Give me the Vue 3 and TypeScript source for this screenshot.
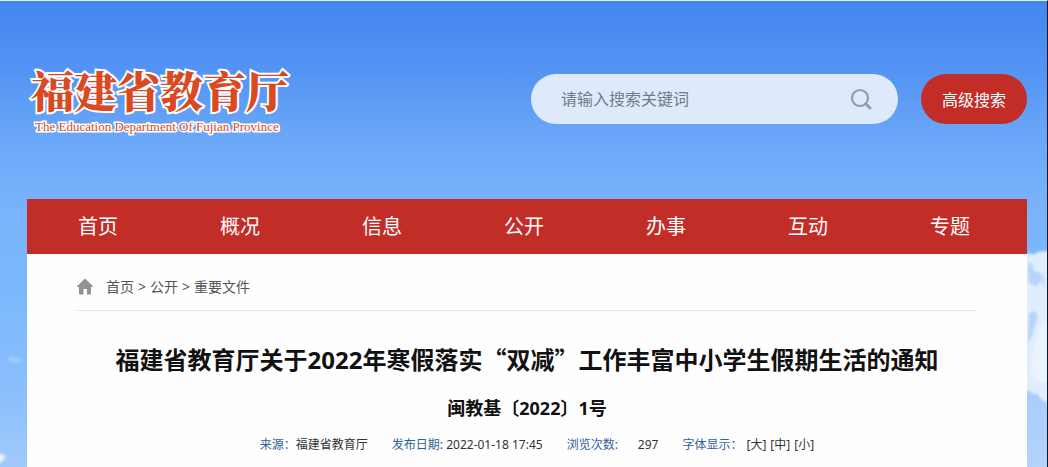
<script setup lang="ts">
import { ref } from 'vue'

const keyword = ref('')
const navItems: string[] = ['首页', '概况', '信息', '公开', '办事', '互动', '专题']
const sizes: string[] = ['大', '中', '小']
</script>

<template>
  <div class="page" lang="zh-CN">
    <svg class="clouds clouds-left" viewBox="0 0 27 227" aria-hidden="true">
      <defs>
        <filter id="soft-left" x="-50%" y="-50%" width="200%" height="200%">
          <feGaussianBlur stdDeviation="1.4" />
        </filter>
      </defs>
      <g filter="url(#soft-left)">
        <path d="M8 118 C11 115 15 119 23 120 C20 124 12 122 8 120Z" fill="#a9d0fd" />
        <path d="M-3 214 C0 213 3 216 6 215 C5 219 2 222 -3 224Z" fill="#eef6ff" />
      </g>
    </svg>
    <svg class="clouds clouds-right" viewBox="0 0 20 227" aria-hidden="true">
      <defs>
        <filter id="soft-right" x="-30%" y="-10%" width="160%" height="120%">
          <feGaussianBlur stdDeviation="1.2" />
        </filter>
      </defs>
      <g filter="url(#soft-right)">
        <path d="M-2 16 C2 10 6 16 8 14 C12 10 16 13 24 10 V162 C17 164 14 158 10 154 C6 156 4 149 -2 150Z" fill="#dfedfd" />
        <path d="M1 24 C4 19 6 28 8 32 C15 30 17 38 12 44 C8 48 3 44 1 40Z" fill="#b9d4fa" />
        <path d="M2 74 C8 68 13 74 9 82 C6 88 6 98 1 102Z" fill="#b5d4fc" />
        <path d="M14 40 L17 30 L18 50Z" fill="#c5dcfb" />
        <path d="M13 85 C18 78 22 84 22 98 V140 C12 146 4 138 4 125 C5 110 10 98 13 85Z" fill="#ebf4fe" />
      </g>
    </svg>

    <header class="header">
      <a class="logo" href="#">
        <span class="logo-cn">福建省教育厅</span>
        <span class="logo-en">The Education Department Of Fujian Province</span>
      </a>
      <form class="search" role="search" @submit.prevent>
        <div class="search-box">
          <input v-model="keyword" class="search-input" type="text" placeholder="请输入搜索关键词" aria-label="搜索关键词" />
          <button class="search-icon" type="submit" aria-label="搜索">
            <svg width="22" height="22" viewBox="0 0 22 22" fill="none" stroke="#919ba9" aria-hidden="true">
              <circle cx="10" cy="10" r="8" stroke-width="2.2" />
              <path d="M15.8 15.8 L20 20" stroke-width="3" stroke-linecap="round" />
            </svg>
          </button>
        </div>
        <button class="advanced" type="button">高级搜索</button>
      </form>
    </header>

    <nav class="nav">
      <a v-for="item in navItems" :key="item" class="nav-item" href="#">{{ item }}</a>
    </nav>

    <main class="content">
      <div class="crumbs">
        <svg class="home" width="16" height="17" viewBox="0 0 16 17" aria-hidden="true">
          <path d="M8 0.5 L16 8.2 Q16 9 15.2 9 H14 V15.5 Q14 16.5 13 16.5 H10 V11 H6.5 V16.5 H3 Q2 16.5 2 15.5 V9 H0.8 Q0 9 0 8.2Z" fill="#929292" />
        </svg>
        <a href="#">首页</a><span>&gt;</span><a href="#">公开</a><span>&gt;</span><a href="#">重要文件</a>
      </div>
      <h1 class="title">福建省教育厅关于<span class="num">2022</span>年寒假落实“双减”工作丰富中小学生假期生活的通知</h1>
      <h2 class="doc-no">闽教基〔<span class="num">2022</span>〕<span class="num">1</span>号</h2>
      <div class="meta">
        <span><span class="label">来源：</span>福建省教育厅</span>
        <span><span class="label">发布日期:</span> 2022-01-18 17:45</span>
        <span class="views"><span class="label">浏览次数:</span><span>297</span></span>
        <span class="sizes">
          <span class="label">字体显示：</span>
          <button v-for="s in sizes" :key="s" class="size" type="button">[{{ s }}]</button>
        </span>
      </div>
    </main>
  </div>
</template>

<style>
body {
  background: #b0d3fd;
}
</style>

<style scoped>
.page {
  position: relative;
  box-sizing: border-box;
  min-height: 100vh;
  display: flex;
  flex-direction: column;
  padding: 0 20px 0 27px;
  border-top: 1px solid #d9f2fb;
  border-right: 1px solid #0b1626;
  background: linear-gradient(#4386ef 0, #5293f3 66px, #69a6f8 132px, #78b2fb 198px, #7ab8fc 290px, #8dc0fc 400px, #a0c9fb 466px);
  font-family: "Noto Sans", "Noto Sans CJK SC", sans-serif;
  overflow: hidden;
}
.clouds {
  position: absolute;
  top: 239px;
  height: 227px;
}
.clouds-left {
  left: 0;
  width: 27px;
}
.clouds-right {
  right: 0;
  width: 20px;
  background: linear-gradient(#78b2fb00, #a9cdfb 150px, #b1d3fc);
}
a {
  color: inherit;
  text-decoration: none;
}
button {
  border: 0;
  padding: 0;
  background: none;
  font-family: inherit;
  cursor: pointer;
}
.header {
  display: flex;
  justify-content: space-between;
  align-items: center;
  box-sizing: border-box;
  height: 198px;
  padding-bottom: 2px;
}
.logo {
  display: flex;
  flex-direction: column;
  padding: 4px 0 0 4px;
  color: #d94a22;
  -webkit-text-stroke: 4px #fff;
  paint-order: stroke fill;
  white-space: nowrap;
}
.logo-cn {
  font-family: "Noto Serif CJK SC", "Noto Sans CJK SC", serif;
  font-size: 43px;
  font-weight: 900;
  line-height: 50px;
}
.logo-en {
  padding: 2px 0 0 4px;
  font-family: "Liberation Serif", serif;
  font-size: 13px;
  line-height: 20px;
  -webkit-text-stroke-width: 3px;
}
.search {
  display: flex;
  gap: 23px;
}
.search-box {
  display: flex;
  align-items: center;
  box-sizing: border-box;
  width: 367px;
  height: 50px;
  padding: 0 26px 0 30px;
  border-radius: 25px;
  background: #deeafc;
}
.search-input {
  flex: 1;
  min-width: 0;
  padding: 0 0 2px;
  border: 0;
  outline: 0;
  background: none;
  color: #757b84;
  font-family: "Noto Sans CJK SC", sans-serif;
  font-size: 16px;
}
.search-input::placeholder {
  color: #757b84;
  opacity: 1;
}
.search-icon {
  display: flex;
}
.advanced {
  width: 106px;
  height: 50px;
  border-radius: 25px;
  background: #c32d27;
  color: #fff;
  font-size: 16px;
}
.nav {
  position: relative;
  display: flex;
  padding-right: 6px;
  background: #c32d27;
}
.nav-item {
  flex: 1;
  color: #fff;
  font-size: 20px;
  line-height: 55px;
  text-align: center;
}
.content {
  position: relative;
  flex: 1;
  padding: 0 50px 10px;
  background: #fefefe;
  color: #111;
}
.crumbs {
  display: flex;
  align-items: center;
  gap: 4px;
  box-sizing: border-box;
  height: 57px;
  padding-top: 8px;
  border-bottom: 1px solid #e4e4e4;
  color: #555;
  font-size: 14px;
}
.home {
  margin-right: 9px;
}
.title {
  margin: 30px 0 0;
  font-size: 24px;
  line-height: 36px;
  font-family: "Noto Sans CJK SC", sans-serif;
  text-align: center;
}
.num {
  font-family: "Noto Sans", sans-serif;
}
.doc-no {
  margin: 15px 0 0;
  font-size: 18px;
  line-height: 28px;
  font-family: "Noto Sans CJK SC", sans-serif;
  text-align: center;
}
.meta {
  display: flex;
  justify-content: center;
  gap: 24px;
  margin-top: 13px;
  padding-left: 20px;
  color: #333;
  font-size: 12px;
  line-height: 20px;
}
.label {
  color: #2e6399;
}
.views {
  display: flex;
  gap: 20px;
}
.sizes {
  display: flex;
  gap: 4px;
}
.size {
  color: #333;
  font-size: 12px;
  line-height: 20px;
}
</style>
